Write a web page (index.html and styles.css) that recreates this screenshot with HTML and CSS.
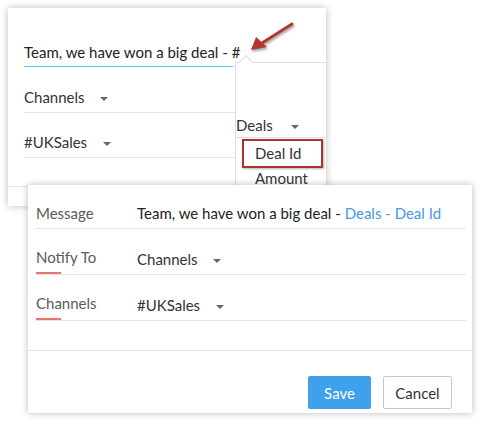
FILE: index.html
```html
<!DOCTYPE html>
<html lang="en">

<head>
    <meta charset="UTF-8">
    <title>Slack notification</title>
    <link rel="stylesheet" href="styles.css">
</head>

<body>
    <main class="stage">

        <section class="card card-back">
            <div class="msg-input">Team, we have won a big deal - #</div>
            <div class="back-row"><span class="select">Channels <i class="caret"></i></span></div>
            <div class="back-row"><span class="select">#UKSales <i class="caret"></i></span></div>
            <div class="back-foot"></div>

            <div class="merge-menu">
                <span class="merge-tip"></span>
                <div class="merge-module">Deals <i class="caret"></i></div>
                <ul class="merge-fields">
                    <li class="picked">Deal Id</li>
                    <li>Amount</li>
                </ul>
            </div>
        </section>

        <svg class="pointer" width="60" height="40" viewBox="0 0 60 40">
            <line x1="52" y1="7" x2="22" y2="26" stroke="#b3382c" stroke-width="3" stroke-linecap="round" />
            <polygon points="11,33 16,20 27,30" fill="#b3382c" />
        </svg>

        <section class="card card-front">
            <div class="form">
                <div class="row">
                    <span class="label">Message</span>
                    <span class="value">Team, we have won a big deal - <span class="merge">Deals - Deal Id</span></span>
                </div>
                <div class="row">
                    <span class="label required">Notify To</span>
                    <span class="value select">Channels <i class="caret"></i></span>
                </div>
                <div class="row">
                    <span class="label required">Channels</span>
                    <span class="value select">#UKSales <i class="caret"></i></span>
                </div>
            </div>
            <footer class="actions">
                <button class="btn btn-save">Save</button>
                <button class="btn btn-cancel">Cancel</button>
            </footer>
        </section>

    </main>
</body>

</html>
```

FILE: styles.css
```css
* {
    box-sizing: border-box;
}

body {
    margin: 0;
    background: #fff;
    font-family: Lato, "Open Sans", sans-serif;
    font-size: 15px;
    color: #222;
}

.stage {
    position: relative;
    width: 485px;
    height: 425px;
    overflow: hidden;
}

.card {
    position: absolute;
    background: #fff;
    box-shadow: 0 0 7px rgba(0, 0, 0, 0.28);
}

.caret {
    display: inline-block;
    width: 0;
    height: 0;
    border-left: 4px solid transparent;
    border-right: 4px solid transparent;
    border-top: 4px solid #666;
    margin-left: 12px;
    vertical-align: middle;
}

/* card behind */

.card-back {
    left: 8px;
    top: 8px;
    width: 318px;
    height: 198px;
}

.msg-input {
    margin: 34px 0 0 16px;
    width: 209px;
    line-height: 20px;
    padding-bottom: 4px;
    border-bottom: 1px solid #5cc6ee;
    white-space: nowrap;
    color: #222;
}

.back-row {
    margin-left: 16px;
    padding: 20px 0 5px;
    line-height: 20px;
    border-bottom: 1px solid #e4e4e4;
    color: #333;
}

.back-row + .back-row {
    padding-top: 19px;
}

.back-foot {
    margin-top: 28px;
    border-top: 1px solid #e4e4e4;
}

.merge-menu {
    position: absolute;
    left: 227px;
    top: 54px;
    right: 0;
    bottom: 0;
    background: #fff;
    border-left: 1px solid #ddd;
    border-top: 1px solid #ddd;
}

.merge-tip {
    position: absolute;
    left: 5px;
    top: -6px;
    width: 10px;
    height: 10px;
    background: #fff;
    border-left: 1px solid #ddd;
    border-top: 1px solid #ddd;
    transform: rotate(45deg);
}

.merge-module {
    margin-top: 52px;
    line-height: 20px;
    padding-bottom: 2px;
    border-bottom: 1px solid #ddd;
    color: #333;
}

.merge-module .caret {
    margin-left: 14px;
}

.merge-fields {
    list-style: none;
    margin: 0;
    padding: 0;
}

.merge-fields li {
    padding-left: 19px;
    line-height: 20px;
    color: #333;
}

.merge-fields .picked {
    margin: 1px 3px 0 6px;
    padding: 2px 0 3px 11px;
    border: 2px solid #a8352c;
    box-shadow: 1px 1px 2px rgba(0, 0, 0, 0.3);
}

.pointer {
    position: absolute;
    left: 240px;
    top: 17px;
    filter: drop-shadow(1px 2px 1px rgba(0, 0, 0, 0.35));
}

/* card in front */

.card-front {
    left: 28px;
    top: 185px;
    width: 444px;
    height: 228px;
}

.form {
    padding: 0 6px 29px 8px;
    border-bottom: 1px solid #e2e2e2;
}

.row {
    display: flex;
    padding-top: 18px;
    line-height: 20px;
    border-bottom: 1px solid #e4e4e4;
}

.row:first-child {
    padding-bottom: 5px;
}

.label {
    width: 101px;
    flex: none;
    color: #5a5a5a;
}

.label.required::after {
    content: "";
    display: block;
    width: 25px;
    height: 2px;
    margin-top: 5px;
    background: #f0706a;
}

.value {
    color: #222;
    white-space: nowrap;
}

.value.select {
    padding-top: 2px;
    color: #333;
}

.merge {
    color: #4a98e6;
}

.actions {
    display: flex;
    justify-content: flex-end;
    gap: 12px;
    padding: 25px 20px 0 0;
}

.btn {
    height: 33px;
    font-family: inherit;
    font-size: 15px;
    border-radius: 2px;
    cursor: pointer;
}

.btn-save {
    width: 63px;
    background: #3fa1ec;
    border: 1px solid #3fa1ec;
    color: #fff;
}

.btn-cancel {
    width: 69px;
    background: #fff;
    border: 1px solid #c8c8c8;
    color: #333;
}
```
